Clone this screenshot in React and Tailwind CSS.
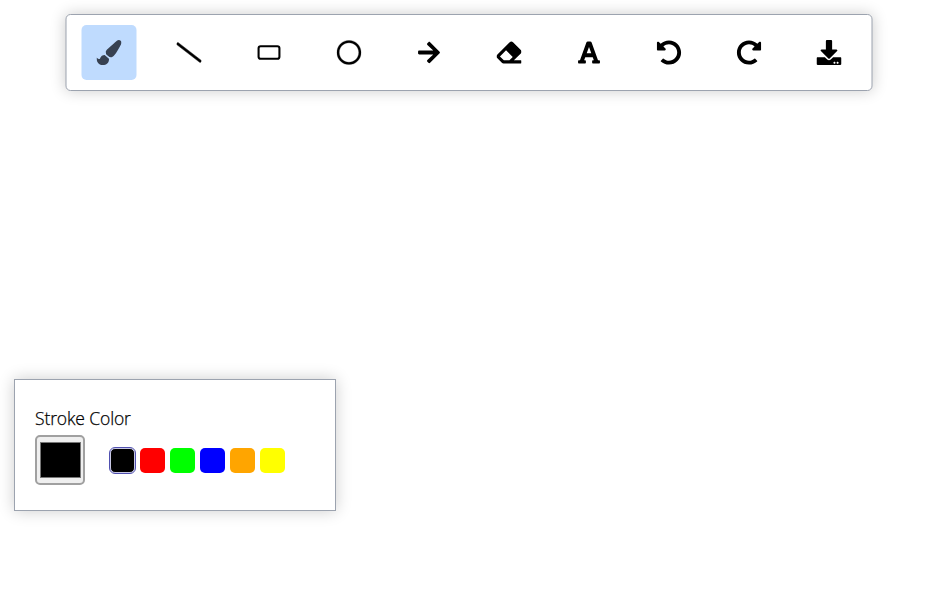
import React from "react";
import { FaPaintBrush, FaDownload, FaSlash, FaRegCircle, FaArrowRight, FaFont, FaUndoAlt, FaRedoAlt, FaEraser } from "react-icons/fa";
import { LuRectangleHorizontal } from "react-icons/lu";

const tools = [
  { name: "Brush", Icon: FaPaintBrush },
  { name: "Line", Icon: FaSlash, stroke: 12 },
  { name: "Rectangle", Icon: LuRectangleHorizontal, stroke: 2 },
  { name: "Circle", Icon: FaRegCircle, stroke: 6 },
  { name: "Arrow", Icon: FaArrowRight },
  { name: "Eraser", Icon: FaEraser },
  { name: "Text", Icon: FaFont },
  { name: "Undo", Icon: FaUndoAlt },
  { name: "Redo", Icon: FaRedoAlt },
  { name: "Download", Icon: FaDownload },
];

const swatches = [
  "bg-black outline outline-1 outline-[#5050b0] border border-[#c8c8e4]",
  "bg-[#ff0000]",
  "bg-[#00ff00]",
  "bg-[#0000ff]",
  "bg-[#ffa500]",
  "bg-[#ffff00]",
];

function Toolbar() {
  return (
    <div className="ml-[66px] flex w-[807px] translate-x-[-0.5px] gap-[25px] rounded-[5px] border border-[#9ca3af] bg-white px-[15px] py-[10px] shadow-[0_0_15px_rgba(0,0,0,0.2)]">
      {tools.map(({ name, Icon, stroke = 0 }, i) => (
        <button
          key={name}
          aria-label={name}
          className={`flex size-[55px] shrink-0 items-center justify-center rounded-[5px] ${i === 0 ? "bg-[#bfdbfe] text-[#374151]" : "text-black"}`}
        >
          <Icon size={25} strokeWidth={stroke} />
        </button>
      ))}
    </div>
  );
}

function StrokePanel() {
  return (
    <div className="mt-[288px] ml-[14px] h-[132px] w-[322px] border border-[#9ca3af] bg-white px-[20px] pt-[26px] shadow-[0_0_15px_rgba(0,0,0,0.2)]">
      <p className="h-[29px] font-['Open_Sans','Noto_Sans',sans-serif] text-[17.5px] leading-[24px] font-light tracking-[-0.12px] text-black [-webkit-text-stroke:0.25px_black]">Stroke Color</p>
      <div className="flex items-center">
        <button aria-label="Custom color" className="flex size-[50px] items-center justify-center rounded-[5px] border-2 border-[#a0a0a0] bg-[#efefef]">
          <span className="h-[36px] w-[41px] border border-[#777777] bg-black" />
        </button>
        <div className="ml-[25px] flex gap-[5px]">
          {swatches.map((style) => (
            <button key={style} aria-label="Color swatch" className={`size-[25px] rounded-[5px] ${style}`} />
          ))}
        </div>
      </div>
    </div>
  );
}

export default function App() {
  return (
    <main className="h-[608px] w-[929px] overflow-hidden bg-white pt-[14px]">
      <Toolbar />
      <StrokePanel />
    </main>
  );
}
